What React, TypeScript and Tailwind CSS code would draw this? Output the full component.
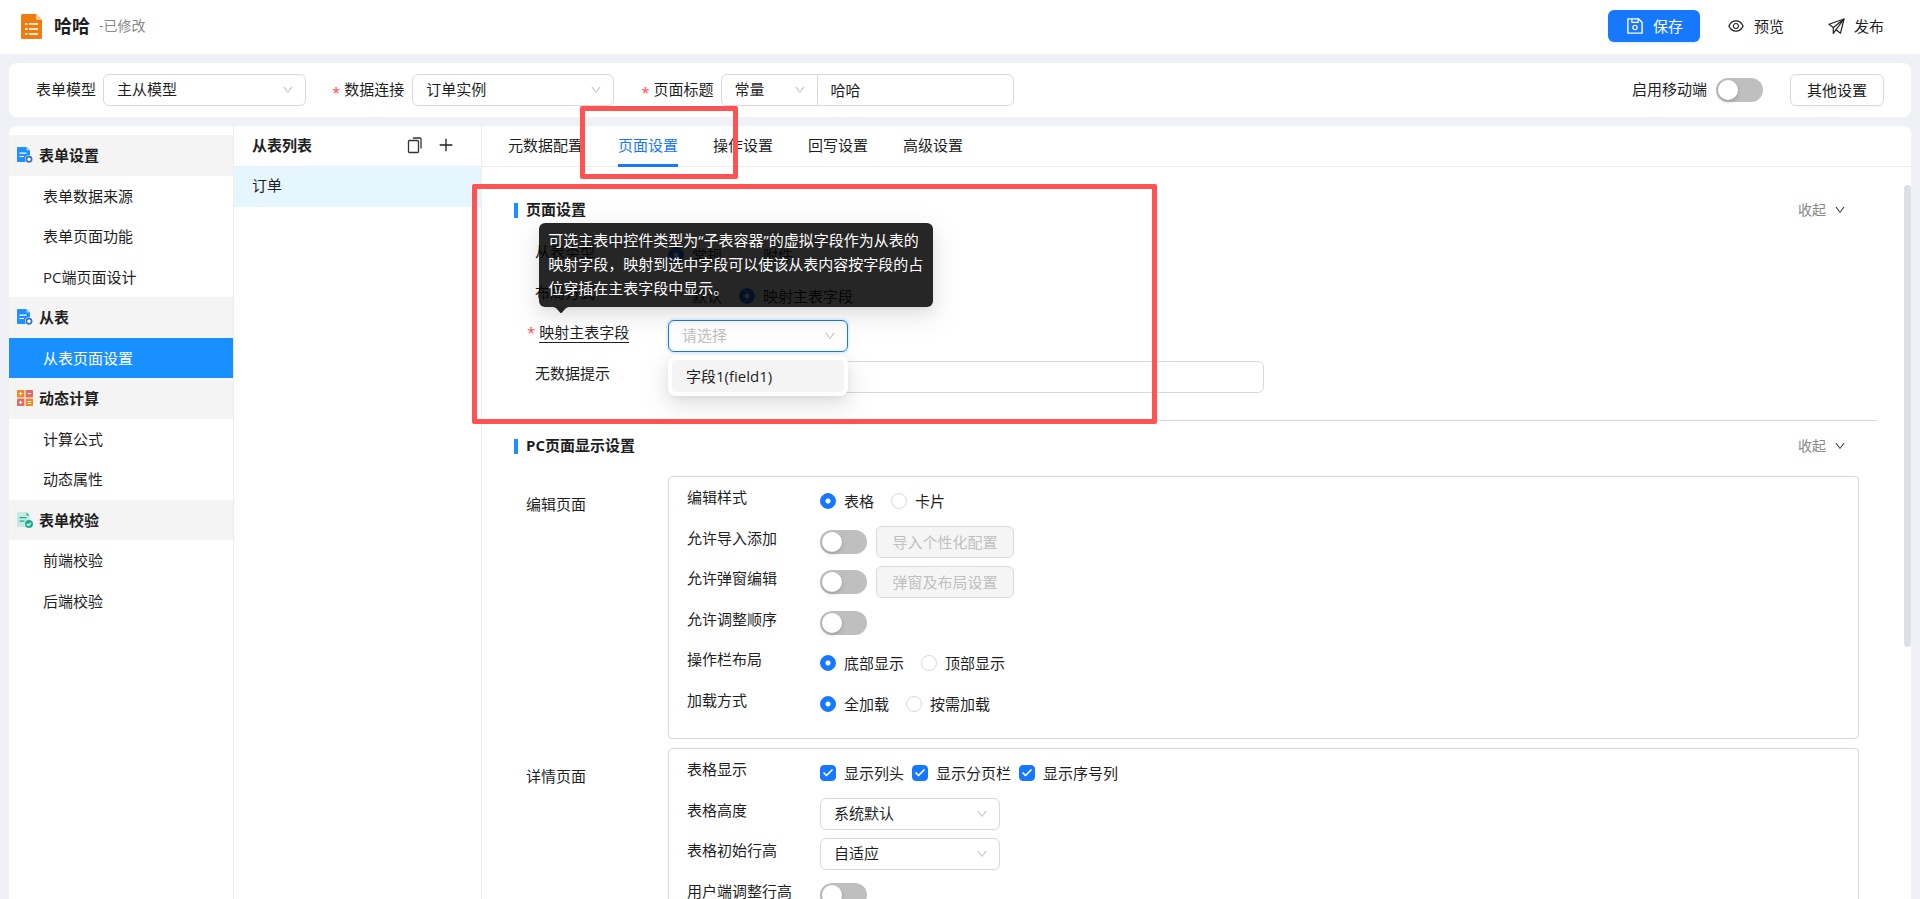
import { useId } from "react";
import type { ReactNode } from "react";
import { Check } from "lucide-react";
import { AiOutlineEye, AiOutlineSave, AiOutlinePlus, AiOutlineDown } from "react-icons/ai";

const floatShadow =
  "shadow-[0_6px_16px_0_rgba(0,0,0,0.08),0_3px_6px_-4px_rgba(0,0,0,0.12),0_9px_28px_8px_rgba(0,0,0,0.05)]";

function FormLogo() {
  return (
    <svg width="21" height="25" viewBox="0 0 21 25" aria-hidden="true">
      <path d="M1.5 0H15l6 6v17.500a1.500 1.500 0 0 1-1.500 1.500h-18A1.500 1.500 0 0 1 0 23.500v-22A1.500 1.500 0 0 1 1.500 0Z" fill="#f07c10" />
      <path d="M15 0l6 6h-4.500A1.500 1.500 0 0 1 15 4.500Z" fill="#fac796" />
      <path d="M4 10h2.500M8 10h9M4 15h2.500M8 15h9M4 20h2.500M8 20h9" stroke="#fde8d2" strokeWidth="1.800" />
    </svg>
  );
}

function DocGearIcon() {
  return (
    <svg width="16" height="16" viewBox="0 0 16 16" aria-hidden="true">
      <path d="M1 0h8.500L13 3.500V15H1a1 1 0 0 1-1-1V1a1 1 0 0 1 1-1Z" fill="#1e8fff" />
      <path d="M9.500 0L13 3.500H9.500Z" fill="#9fd0ff" />
      <path d="M2.500 6.200h7M2.500 9.500h4.500" stroke="#fff" strokeWidth="1.200" />
      <circle cx="12" cy="12.300" r="4" fill="#f4f4f4" />
      <circle cx="12" cy="12.300" r="2.600" fill="#fff" stroke="#3b6fc0" strokeWidth="1.700" />
    </svg>
  );
}

function CalcIcon() {
  return (
    <svg width="16" height="16" viewBox="0 0 16 16" aria-hidden="true">
      <rect width="16" height="16" rx="1" fill="#f3d3c4" />
      <rect width="7.200" height="7.200" rx="0.800" fill="#f0861f" />
      <rect x="8.800" width="7.200" height="7.200" rx="0.800" fill="#dc6b64" />
      <rect y="8.800" width="7.200" height="7.200" rx="0.800" fill="#dc6b64" />
      <rect x="8.800" y="8.800" width="7.200" height="7.200" rx="0.800" fill="#f0861f" />
      <path d="M3.600 1.800v3.600M1.800 3.600h3.600M10.600 3.600h3.600M3.600 10.600v3.600M1.800 12.400h3.600M10.600 11.500h3.600M10.600 13.500h3.600" stroke="#fff" strokeWidth="1" />
    </svg>
  );
}

function DocCheckIcon() {
  return (
    <svg width="16" height="16" viewBox="0 0 16 16" aria-hidden="true">
      <path d="M1 0h8.500L13 3.500V15H1a1 1 0 0 1-1-1V1a1 1 0 0 1 1-1Z" fill="#c3ebe2" />
      <path d="M9.500 0.500L12.500 3.500H9.500Z" fill="#1fae92" />
      <path d="M2.500 5.700h7M2.500 9.200h5" stroke="#1fae92" strokeWidth="1.200" />
      <circle cx="12" cy="12" r="4" fill="#1fae92" />
      <path d="M10 12l1.500 1.400 2.500-2.600" stroke="#fff" strokeWidth="1.200" fill="none" />
    </svg>
  );
}

function CopyIcon() {
  return (
    <svg width="16" height="17" viewBox="0 0 16 17" fill="none" stroke="#333" strokeWidth="1.300" aria-hidden="true">
      <rect x="1.500" y="3.500" width="10" height="12" rx="1" />
      <path d="M6 1h7a1 1 0 0 1 1 1v9.500" />
    </svg>
  );
}

function SendIcon() {
  return (
    <svg width="17" height="17" viewBox="0 0 17 17" fill="none" stroke="currentColor" strokeWidth="1.200" strokeLinejoin="round" aria-hidden="true">
      <path d="M16 1L1 6.200l4.300 3.300v6L8 11.700l4.500 3.500Z" />
      <path d="M5.300 9.500L16 1 8 11.700" />
    </svg>
  );
}

function Select({
  id,
  options,
  className = "",
}: {
  id?: string;
  options: string[];
  className?: string;
}) {
  return (
    <span className={`relative inline-flex h-8 ${className}`}>
      <select
        id={id}
        aria-label={id ? undefined : options[0]}
        className="h-full w-full appearance-none rounded-[6px] border border-[#d9d9d9] bg-white pr-8 pb-[2px] pl-[13px] outline-none"
      >
        {options.map((o) => (
          <option key={o}>{o}</option>
        ))}
      </select>
      <AiOutlineDown className="pointer-events-none absolute top-[10px] right-3 size-3 text-[#bfbfbf]" />
    </span>
  );
}

function Switch({ label }: { label: string }) {
  return (
    <input
      type="checkbox"
      role="switch"
      aria-label={label}
      className="relative h-6 w-[47px] shrink-0 appearance-none rounded-full bg-[#bfbfbf] before:absolute before:top-[2px] before:left-[2px] before:size-5 before:rounded-full before:bg-white before:shadow-[0_2px_4px_rgba(0,35,11,0.2)] checked:bg-[#1677ff] checked:before:left-[25px]"
    />
  );
}

function RadioGroup({ options, selected }: { options: string[]; selected: number }) {
  const name = useId();
  return (
    <div className="flex gap-[17px]">
      {options.map((o, i) => (
        <label key={o} className="flex items-center gap-2">
          <input
            type="radio"
            name={name}
            defaultChecked={i === selected}
            className="size-4 appearance-none rounded-full border border-[#d9d9d9] bg-white checked:border-[#1677ff] checked:bg-[radial-gradient(circle,#fff_2px,#1677ff_3px)]"
          />
          {o}
        </label>
      ))}
    </div>
  );
}

function CheckItem({ label }: { label: string }) {
  return (
    <label className="flex items-center gap-2">
      <span className="relative size-4">
        <input
          type="checkbox"
          defaultChecked
          className="block size-4 appearance-none rounded-[4px] border border-[#d9d9d9] checked:border-[#1677ff] checked:bg-[#1677ff]"
        />
        <Check className="pointer-events-none absolute top-[2px] left-[2px] size-3 text-white" strokeWidth={3.5} />
      </span>
      {label}
    </label>
  );
}

function Row({
  label,
  labelClass,
  children,
}: {
  label: ReactNode;
  labelClass: string;
  children: ReactNode;
}) {
  return (
    <div className="flex items-center">
      <div className={`flex shrink-0 items-center pb-2 ${labelClass}`}>{label}</div>
      {children}
    </div>
  );
}

function SectionTitle({ children }: { children: ReactNode }) {
  return (
    <div className="flex h-6 items-center">
      <span className="h-[15px] w-1 bg-[#1890ff]" />
      <h2 className="ml-2 pb-[2px] font-bold">{children}</h2>
      <button type="button" className="mr-[31px] ml-auto flex items-center gap-2 text-sm text-[#888]">
        收起
        <AiOutlineDown className="size-3 text-[#333]" />
      </button>
    </div>
  );
}

function Required() {
  return <span className="mr-1 align-[-3px] leading-none text-[#ff4d4f]">*</span>;
}

const groups: { title: string; icon: ReactNode; items: string[] }[] = [
  { title: "表单设置", icon: <DocGearIcon />, items: ["表单数据来源", "表单页面功能", "PC端页面设计"] },
  { title: "从表", icon: <DocGearIcon />, items: ["从表页面设置"] },
  { title: "动态计算", icon: <CalcIcon />, items: ["计算公式", "动态属性"] },
  { title: "表单校验", icon: <DocCheckIcon />, items: ["前端校验", "后端校验"] },
];

const tabs = ["元数据配置", "页面设置", "操作设置", "回写设置", "高级设置"];

export default function App() {
  return (
    <div className="flex h-screen flex-col overflow-hidden bg-[#eff1f6] font-['Open_Sans','Noto_Sans_CJK_SC',sans-serif] text-[15px] leading-6 text-[#1f1f1f]">
      <header className="flex h-[54px] shrink-0 items-center bg-white pr-9 pb-[2px] pl-[21px]">
        <FormLogo />
        <h1 className="ml-3 text-lg font-bold">哈哈</h1>
        <span className="ml-[9px] text-sm text-[#888]">-已修改</span>
        <div className="ml-auto flex items-center">
          <button
            type="button"
            className="flex h-8 w-[92px] items-center justify-center gap-2 rounded-[6px] bg-[#1677ff] text-white shadow-[0_2px_0_rgba(5,145,255,0.1)]"
          >
            <AiOutlineSave className="size-5" />
            保存
          </button>
          <button type="button" className="ml-[27px] flex items-center gap-[9px]">
            <AiOutlineEye className="size-[18px]" />
            预览
          </button>
          <button type="button" className="ml-11 flex items-center gap-[9px]">
            <SendIcon />
            发布
          </button>
        </div>
      </header>

      <section className="mx-[9px] mt-[9px] flex h-[54px] shrink-0 items-center rounded-lg bg-white px-[27px]">
        <label htmlFor="model" className="mr-[7px] pb-[2px]">表单模型</label>
        <Select id="model" options={["主从模型"]} className="w-[203px]" />
        <label htmlFor="conn" className="mr-2 ml-[26px] pb-[2px]">
          <Required />
          数据连接
        </label>
        <Select id="conn" options={["订单实例"]} className="w-[202px]" />
        <label htmlFor="title" className="mr-[7px] ml-[27px] pb-[2px]">
          <Required />
          页面标题
        </label>
        <span className="flex">
          <Select options={["常量"]} className="w-[97px] [&>select]:rounded-r-none" />
          <input
            id="title"
            defaultValue="哈哈"
            className="-ml-px h-8 w-[197px] rounded-r-[6px] border border-[#d9d9d9] bg-white px-[13px] pb-[2px] outline-none"
          />
        </span>
        <span className="ml-auto pb-[2px]">启用移动端</span>
        <span className="ml-[9px] flex">
          <Switch label="启用移动端" />
        </span>
        <button
          type="button"
          className="ml-[27px] h-8 w-[94px] rounded-[6px] border border-[#d9d9d9] bg-white shadow-[0_2px_0_rgba(0,0,0,0.02)]"
        >
          其他设置
        </button>
      </section>

      <main className="mx-[9px] mt-[9px] flex min-h-0 flex-1 rounded-t-lg bg-white">
        <aside className="w-[225px] shrink-0 border-r border-[#ededed] pt-[9px]">
          <nav className="grid h-[486px] auto-rows-fr">
            {groups.flatMap((g) => [
              <div key={g.title} className="flex items-center gap-[6px] bg-[#f4f4f4] pl-2 font-bold">
                {g.icon}
                {g.title}
              </div>,
              ...g.items.map((item) => (
                <a
                  key={item}
                  href="#"
                  className={`flex items-center pl-[34px] ${item === "从表页面设置" ? "bg-[#1890ff] text-white" : ""}`}
                >
                  {item}
                </a>
              )),
            ])}
          </nav>
        </aside>

        <section className="w-[248px] shrink-0 border-r border-[#ededed]">
          <div className="flex h-[41px] items-center border-b border-[#ededed] pr-[26px] pb-[2px] pl-[18px]">
            <h2 className="font-bold">从表列表</h2>
            <button type="button" aria-label="复制" className="ml-auto">
              <CopyIcon />
            </button>
            <button type="button" aria-label="新增" className="ml-[14px]">
              <AiOutlinePlus className="size-[18px]" />
            </button>
          </div>
          <a href="#" className="flex h-10 items-center bg-[#e6f6ff] pb-1 pl-[18px]">
            订单
          </a>
        </section>

        <section className="relative flex min-w-0 flex-1 flex-col">
          <div role="tablist" className="flex h-[41px] shrink-0 gap-[35px] border-b border-[#ededed] pl-[26px]">
            {tabs.map((t) => (
              <button
                key={t}
                type="button"
                role="tab"
                aria-selected={t === "页面设置"}
                className={`-mb-px border-b-[3px] ${t === "页面设置" ? "border-[#1677ff] text-[#1677ff]" : "border-transparent"}`}
              >
                {t}
              </button>
            ))}
          </div>

          <div className="min-h-0 flex-1 overflow-y-auto pr-[34px] pl-8 [scrollbar-width:none]">
            <div className="border-b border-[#d9d9d9] pt-[31px] pb-[23px]">
              <SectionTitle>页面设置</SectionTitle>
              <div className="mt-[13px] grid h-[162px] auto-rows-fr">
                <Row labelClass="w-[154px] pl-[21px]" label="从表类型">
                  <RadioGroup options={["常规", "附件"]} selected={0} />
                </Row>
                <Row labelClass="w-[154px] pl-[21px]" label="布局方式">
                  <RadioGroup options={["默认", "映射主表字段"]} selected={1} />
                </Row>
                <Row
                  labelClass="w-[154px] pl-[13px]"
                  label={
                    <>
                      <Required />
                      <span className="relative">
                        <label htmlFor="mapping" className="block border-b border-[#1f1f1f] leading-5">
                          映射主表字段
                        </label>
                        <span
                          role="tooltip"
                          className={`absolute bottom-9 left-0 z-10 w-[394px] rounded-[6px] bg-black/85 px-[9px] pt-[5px] pb-[7px] leading-6 text-white ${floatShadow}`}
                        >
                          可选主表中控件类型为“子表容器”的虚拟字段作为从表的映射字段，映射到选中字段可以使该从表内容按字段的占位穿插在主表字段中显示。
                          <svg width="16" height="7" viewBox="0 0 16 7" className="absolute top-full left-[14px]" aria-hidden="true">
                            <path d="M0 0H16Q14 0 12.500 1.500L9 5.500Q8 6.500 7 5.500L3.500 1.500Q2 0 0 0Z" fill="#000" fillOpacity="0.850" />
                          </svg>
                        </span>
                      </span>
                    </>
                  }
                >
                  <span className="relative">
                    <select
                      id="mapping"
                      defaultValue=""
                      className="block h-8 w-[180px] appearance-none rounded-[6px] border border-[#1677ff] bg-white px-[13px] pb-[2px] text-[#bfbfbf] shadow-[0_0_0_2px_rgba(5,145,255,0.1)] outline-none"
                    >
                      <option value="">请选择</option>
                      <option value="field1">字段1(field1)</option>
                    </select>
                    <AiOutlineDown className="pointer-events-none absolute top-[10px] right-3 size-3 text-[#bfbfbf]" />
                    <ul
                      role="listbox"
                      className={`absolute top-9 left-0 z-10 w-[180px] rounded-lg bg-white p-1 ${floatShadow}`}
                    >
                      <li role="option" aria-selected="false" className="h-8 rounded-[4px] bg-[#f4f4f4] px-[14px] leading-8">
                        字段1(field1)
                      </li>
                    </ul>
                  </span>
                </Row>
                <Row labelClass="w-[154px] pl-[21px]" label={<label htmlFor="empty">无数据提示</label>}>
                  <input id="empty" className="h-8 w-[596px] rounded-[6px] border border-[#d9d9d9] px-3 outline-none" />
                </Row>
              </div>
            </div>

            <div className="pt-[13px]">
              <SectionTitle>PC页面显示设置</SectionTitle>
              <div className="mt-[18px] mr-[18px] flex flex-col gap-[9px]">
                <div className="flex">
                  <div className="w-[154px] shrink-0 pt-4 pl-3">编辑页面</div>
                  <div className="flex-1 rounded-[4px] border border-[#d9d9d9] pt-1 pb-[14px] pl-[18px]">
                    <div className="grid h-[243px] auto-rows-fr">
                      <Row labelClass="w-[133px]" label="编辑样式">
                        <RadioGroup options={["表格", "卡片"]} selected={0} />
                      </Row>
                      <Row labelClass="w-[133px]" label="允许导入添加">
                        <Switch label="允许导入添加" />
                        <button type="button" disabled className="ml-[9px] h-8 w-[138px] rounded-[6px] border border-[#d9d9d9] bg-[#f5f5f5] text-[#bfbfbf]">
                          导入个性化配置
                        </button>
                      </Row>
                      <Row labelClass="w-[133px]" label="允许弹窗编辑">
                        <Switch label="允许弹窗编辑" />
                        <button type="button" disabled className="ml-[9px] h-8 w-[138px] rounded-[6px] border border-[#d9d9d9] bg-[#f5f5f5] text-[#bfbfbf]">
                          弹窗及布局设置
                        </button>
                      </Row>
                      <Row labelClass="w-[133px]" label="允许调整顺序">
                        <Switch label="允许调整顺序" />
                      </Row>
                      <Row labelClass="w-[133px]" label="操作栏布局">
                        <RadioGroup options={["底部显示", "顶部显示"]} selected={0} />
                      </Row>
                      <Row labelClass="w-[133px]" label="加载方式">
                        <RadioGroup options={["全加载", "按需加载"]} selected={0} />
                      </Row>
                    </div>
                  </div>
                </div>
                <div className="flex">
                  <div className="w-[154px] shrink-0 pt-4 pl-3">详情页面</div>
                  <div className="flex-1 rounded-[4px] border border-[#d9d9d9] pt-1 pb-[14px] pl-[18px]">
                    <div className="grid h-[162px] auto-rows-fr">
                      <Row labelClass="w-[133px]" label="表格显示">
                        <div className="flex gap-2">
                          <CheckItem label="显示列头" />
                          <CheckItem label="显示分页栏" />
                          <CheckItem label="显示序号列" />
                        </div>
                      </Row>
                      <Row labelClass="w-[133px]" label={<label htmlFor="height">表格高度</label>}>
                        <Select id="height" options={["系统默认"]} className="w-[180px]" />
                      </Row>
                      <Row labelClass="w-[133px]" label={<label htmlFor="line">表格初始行高</label>}>
                        <Select id="line" options={["自适应"]} className="w-[180px]" />
                      </Row>
                      <Row labelClass="w-[133px]" label="用户端调整行高">
                        <Switch label="用户端调整行高" />
                      </Row>
                    </div>
                  </div>
                </div>
              </div>
            </div>
          </div>

          <span className="absolute top-[59px] right-0 h-[462px] w-[7px] rounded-full bg-[#dcdfe4]" />
          <span className="pointer-events-none absolute top-[-20px] left-[98px] z-20 h-[73px] w-[158px] rounded-[2px] border-[5px] border-[#ff5252]" />
          <span className="pointer-events-none absolute top-[58px] left-[-10px] z-20 h-[240px] w-[685px] rounded-[2px] border-[5px] border-[#ff5252]" />
        </section>
      </main>
    </div>
  );
}
